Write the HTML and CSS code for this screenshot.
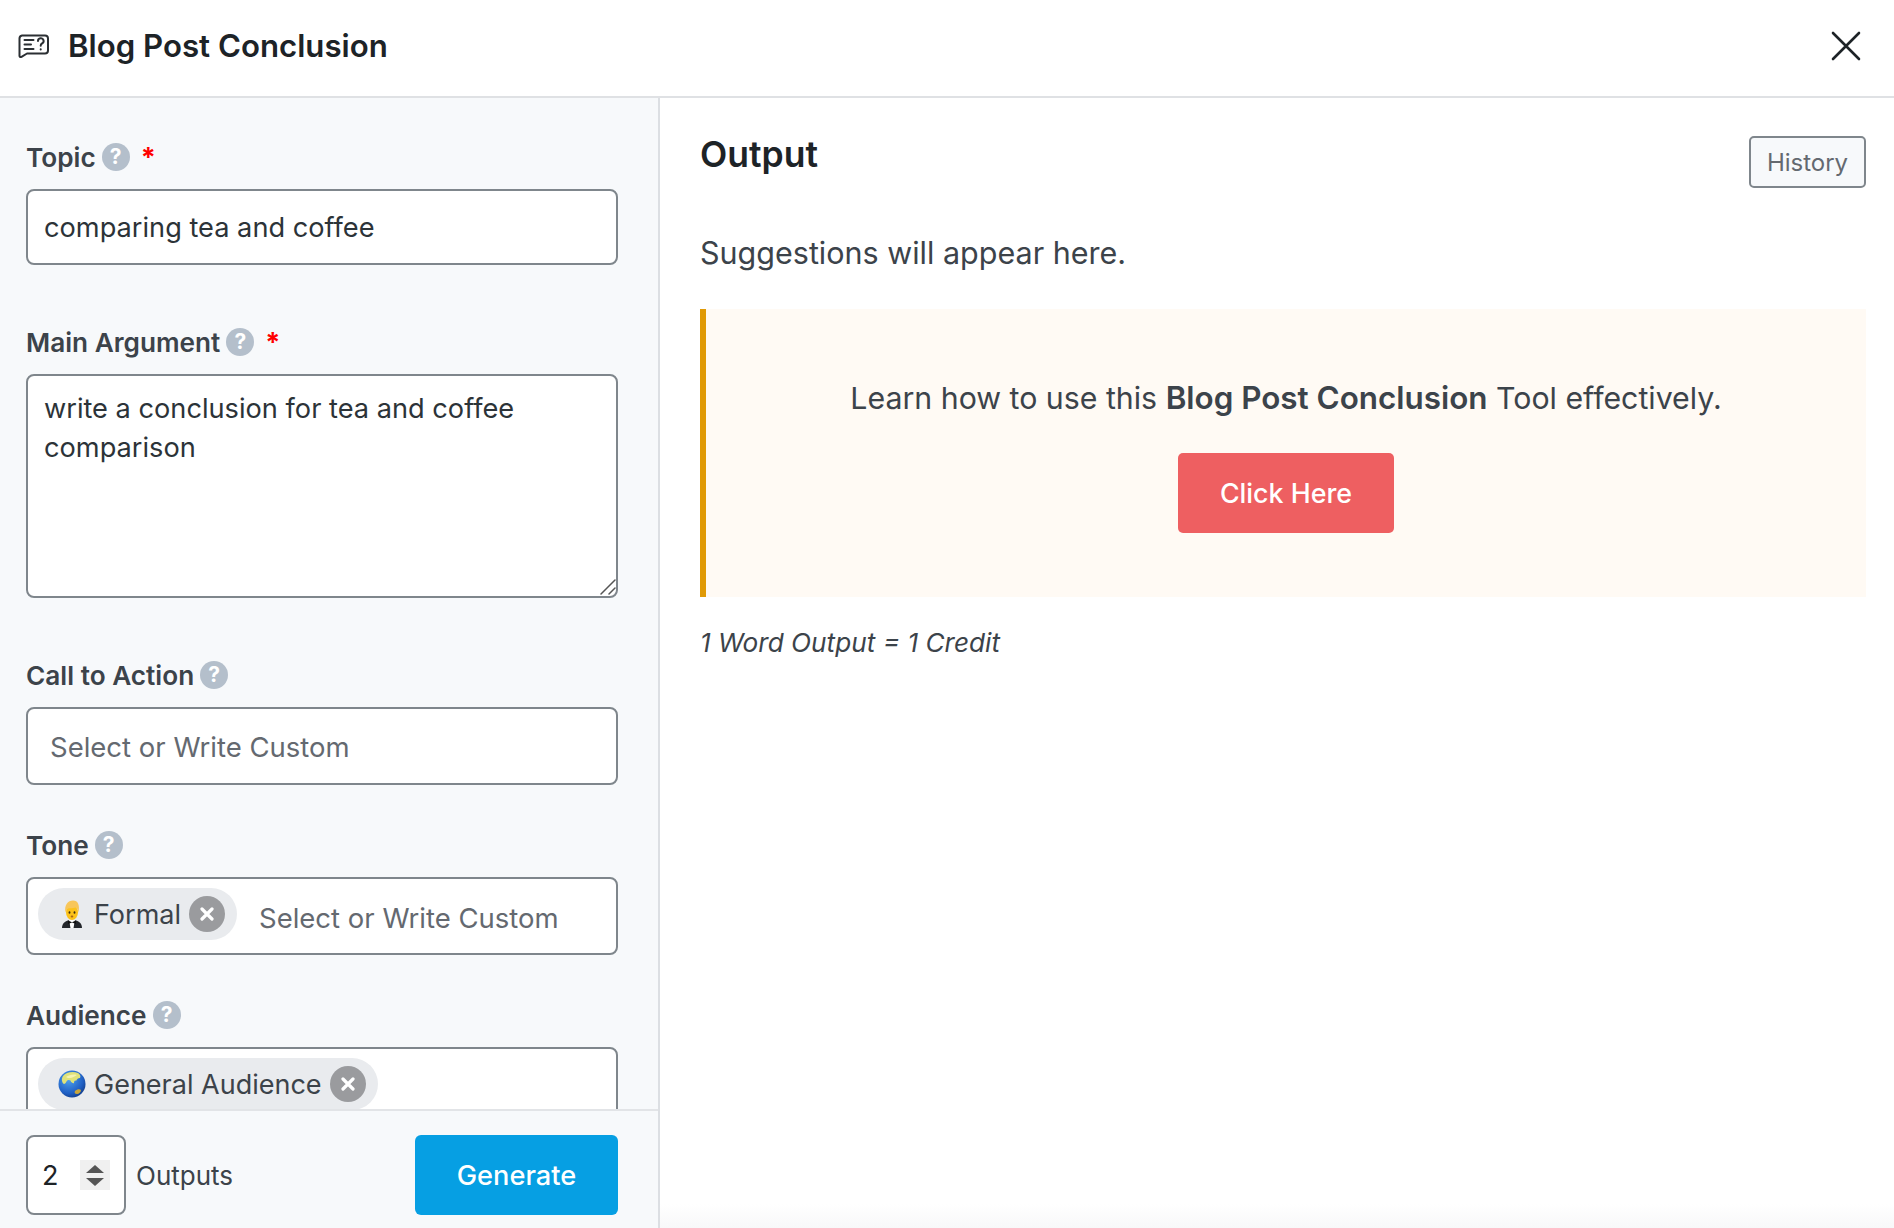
FILE: index.html
```html
<!DOCTYPE html>
<html lang="en">
<head>
<meta charset="utf-8">
<title>Blog Post Conclusion</title>
<link rel="stylesheet" href="styles.css">
</head>
<body>
<div class="app">
  <header class="topbar">
    <div class="topbar-title">
      <svg class="tool-icon" viewBox="0 0 31 24" fill="none" stroke="#2b2f33" stroke-width="2" stroke-linecap="round" stroke-linejoin="round">
        <path d="M4 1.500h23a3 3 0 0 1 3 3v12a3 3 0 0 1-3 3H9l-5.500 3.300a1.200 1.200 0 0 1-2-1V4.500A3 3 0 0 1 4 1.500z"/>
        <path d="M6.500 6h9M6.500 10.500h6.500M6.500 15h9"/>
        <path d="M20 7a2.800 2.800 0 1 1 4 2.500c-1 .5-1.300 1-1.300 2.200"/>
        <path d="M22.700 15.300v.1"/>
      </svg>
      <h1 class="title">Blog Post Conclusion</h1>
    </div>
    <button class="close" type="button" aria-label="Close">
      <svg viewBox="0 0 30 30" fill="none" stroke="#1d2327" stroke-width="2.600" stroke-linecap="round"><path d="M2 2l26 26M28 2L2 28"/></svg>
    </button>
  </header>
  <main class="workspace">
    <section class="form-panel">
      <div class="form-scroll">
        <div class="field field-wide">
          <label class="label">Topic <span class="help">?</span> <span class="req">*</span></label>
          <input class="control text-control" type="text" value="comparing tea and coffee">
        </div>
        <div class="field field-wide">
          <label class="label">Main Argument <span class="help">?</span> <span class="req">*</span></label>
          <div class="textarea-wrap">
            <textarea class="control textarea-control">write a conclusion for tea and coffee comparison</textarea>
            <svg class="grip" viewBox="0 0 16 16" fill="none" stroke="#555" stroke-width="1.500" stroke-linecap="round"><path d="M1 15L15 1M9 15l6-6"/></svg>
          </div>
        </div>
        <div class="field">
          <label class="label">Call to Action <span class="help">?</span></label>
          <div class="control select-control"><span class="placeholder">Select or Write Custom</span></div>
        </div>
        <div class="field">
          <label class="label">Tone <span class="help">?</span></label>
          <div class="control select-control has-pill">
            <span class="pill">
              <svg class="emoji" viewBox="0 0 28 28">
                <path d="M4 28c0-5 3.500-8 10-8s10 3 10 8z" fill="#23262b"/>
                <path d="M11 19.500h6l-1.500 8.500h-3z" fill="#fff"/>
                <path d="M10 20.500l4 1.700 4-1.700v3.400l-4-1.500-4 1.500z" fill="#111"/>
                <ellipse cx="14" cy="12.500" rx="6" ry="7.500" fill="#fcc21b"/>
                <path d="M7.500 12.500C6 5 10 .5 15 .5c5 0 7 4.500 5.500 12-.6-3-1.500-4.500-3-5-3 1-6 .5-7.500 1-1.300 1-2 2-2.500 4z" fill="#f8c65a"/>
                <ellipse cx="11.500" cy="12.500" rx=".9" ry="1.200" fill="#3a2a12"/>
                <ellipse cx="16.500" cy="12.500" rx=".9" ry="1.200" fill="#3a2a12"/>
                <ellipse cx="14" cy="16.500" rx="1.300" ry="1" fill="#a8641a"/>
              </svg>
              <span class="pill-text">Formal</span>
              <span class="pill-x"><svg viewBox="0 0 14 14" fill="none" stroke="#fff" stroke-width="3.200" stroke-linecap="round"><path d="M2 2l10 10M12 2L2 12"/></svg></span>
            </span>
            <span class="placeholder inline-placeholder">Select or Write Custom</span>
          </div>
        </div>
        <div class="field">
          <label class="label">Audience <span class="help">?</span></label>
          <div class="control select-control has-pill">
            <span class="pill">
              <svg class="emoji" viewBox="0 0 28 28">
                <defs><radialGradient id="sea" cx="38%" cy="32%" r="75%"><stop offset="0" stop-color="#4fa3f0"/><stop offset=".7" stop-color="#1f5fc4"/><stop offset="1" stop-color="#123a86"/></radialGradient></defs>
                <circle cx="14" cy="14" r="13.500" fill="url(#sea)"/>
                <path d="M5 6c3-4 10-5 15-3 2 1 3 3 2 5-2 0-3 1-4 3-1-1-2 0-2 2-1 1-2-1-3-1 0-2-2-2-3-2-2 1-2 4-4 4-2-1-3-5-1-8z" fill="#dfe27a"/>
                <path d="M8 7c3-2 7-3 11-2-2 1-5 3-7 3-1 0-3 0-4-1z" fill="#f5f3b0"/>
                <path d="M17 21c2-2 5-2 6-1 0 2-2 4-4 4-2 0-3-1-2-3z" fill="#c9a63b"/>
              </svg>
              <span class="pill-text">General Audience</span>
              <span class="pill-x"><svg viewBox="0 0 14 14" fill="none" stroke="#fff" stroke-width="3.200" stroke-linecap="round"><path d="M2 2l10 10M12 2L2 12"/></svg></span>
            </span>
          </div>
        </div>
      </div>
      <footer class="form-footer">
        <div class="outputs">
          <div class="number-control">
            <span class="number-value">2</span>
            <span class="spinner"><svg viewBox="0 0 30 30"><path d="M15 5l9 8H6zM15 26l-9-8h18z" fill="#555"/></svg></span>
          </div>
          <span class="outputs-label">Outputs</span>
        </div>
        <button class="generate" type="button">Generate</button>
      </footer>
    </section>
    <section class="output-panel">
      <div class="output-head">
        <h2 class="output-title">Output</h2>
        <button class="history" type="button">History</button>
      </div>
      <p class="suggestions">Suggestions will appear here.</p>
      <div class="callout">
        <p class="callout-text">Learn how to use this <strong>Blog Post Conclusion</strong> Tool effectively.</p>
        <a class="callout-button" href="#">Click Here</a>
      </div>
      <p class="credit">1 Word Output = 1 Credit</p>
    </section>
  </main>
</div>
</body>
</html>
```

FILE: styles.css
```css
* { box-sizing: border-box; }
html, body { margin: 0; height: 100%; overflow: hidden; background: #fff; }
body { font-family: Inter, "Liberation Sans", sans-serif; color: #3c434a; }

.app { height: 100vh; display: flex; flex-direction: column; }

.topbar { flex: 0 0 98px; display: flex; align-items: center; justify-content: space-between; padding: 0 33px 4px 18px; border-bottom: 2px solid #dfe1e4; background: #fff; }
.topbar-title { display: flex; align-items: center; gap: 19px; }
.tool-icon { width: 31px; height: 24px; display: block; }
.title { margin: 0; font-size: 31.200px; line-height: 40px; font-weight: 600; color: #1d2327; }
.close { padding: 0; width: 30px; height: 30px; border: 0; background: none; display: block; }
.close svg { display: block; width: 30px; height: 30px; }

.workspace { flex: 1; min-height: 0; display: grid; grid-template-columns: 660px 1fr; }

.form-panel { display: flex; flex-direction: column; min-height: 0; background: #f7f9fb; border-right: 2px solid #dcdfe3; }
.form-scroll { flex: 1; min-height: 0; overflow: hidden; padding: 43px 40px 0 26px; }
.field { margin-bottom: 44px; }
.field-wide { margin-bottom: 61px; }
.label { display: flex; align-items: center; gap: 6px; height: 32px; margin-bottom: 16px; font-size: 26.200px; font-weight: 600; color: #3c434a; }
.help { width: 28px; height: 28px; border-radius: 50%; background: #b4bfcb; color: #fff; font-size: 21px; font-weight: 700; line-height: 28px; text-align: center; }
.req { color: #f00; margin-left: 5px; font-size: 27px; font-weight: 700; }

.control { display: block; width: 100%; border: 2px solid #7f868c; border-radius: 8px; background: #fff; font: inherit; font-size: 27.200px; color: #2c3338; }
.text-control { height: 76px; padding: 0 16px; outline: none; }
.textarea-wrap { position: relative; }
.textarea-control { height: 224px; padding: 13px 16px; line-height: 39px; resize: none; outline: none; }
.grip { position: absolute; right: 2px; bottom: 3px; width: 16px; height: 16px; }
.select-control { height: 78px; display: flex; align-items: center; padding: 2px 22px 0; }
.select-control.has-pill { align-items: flex-start; padding: 9px 10px 0; }
.placeholder { color: #646970; font-size: 27.500px; }
.inline-placeholder { align-self: center; margin-left: 22px; margin-top: -6px; }

.pill { display: inline-flex; align-items: center; height: 52px; padding: 0 12px 0 20px; border-radius: 26px; background: #e9ebee; flex: none; }
.emoji { width: 28px; height: 28px; display: block; margin-right: 8px; }
.pill-text { font-size: 27px; color: #3c434a; }
.pill-x { width: 36px; height: 36px; margin-left: 8px; border-radius: 50%; background: #9a9b9e; display: flex; align-items: center; justify-content: center; }
.pill-x svg { width: 14px; height: 14px; display: block; }

.form-footer { flex: 0 0 119px; display: flex; align-items: flex-start; justify-content: space-between; padding: 24px 40px 13px 26px; border-top: 2px solid #e2e4e7; background: #f7f9fb; }
.outputs { display: flex; align-items: center; gap: 10px; }
.number-control { width: 100px; height: 80px; display: flex; align-items: center; justify-content: space-between; padding: 0 14px; border: 2px solid #7f868c; border-radius: 8px; background: #fff; }
.number-value { font-size: 27px; color: #1d2327; }
.spinner { width: 30px; height: 30px; background: #f0f0f0; display: block; }
.spinner svg { display: block; width: 30px; height: 30px; }
.outputs-label { font-size: 26px; color: #3c434a; }
.generate { width: 203px; height: 80px; border: 0; border-radius: 6px; background: #069fe3; color: #fff; font: inherit; font-size: 27.200px; font-weight: 500; }

.output-panel { padding: 38px 28px 0 40px; background: linear-gradient(to top, #f8f8f9 0, #fff 24px); }
.output-head { display: flex; justify-content: space-between; align-items: flex-start; height: 90px; }
.output-title { margin: -1px 0 0; font-size: 35.500px; line-height: 40px; font-weight: 600; color: #1d2327; }
.history { width: 117px; height: 52px; border: 2px solid #7f868c; border-radius: 5px; background: #f7f9fb; color: #646970; font: inherit; font-size: 24px; padding: 0; }
.suggestions { margin: 0 0 29px; font-size: 30.500px; line-height: 54px; color: #3c434a; }
.callout { height: 288px; padding-top: 67px; border-left: 6px solid #e09a06; background: #fffaf4; display: flex; flex-direction: column; align-items: center; }
.callout-text { margin: 0 0 33px; font-size: 30.300px; line-height: 44px; color: #3c434a; }
.callout-text strong { font-size: 31.400px; font-weight: 600; }
.callout-button { width: 216px; height: 80px; display: flex; align-items: center; justify-content: center; border-radius: 5px; background: #ee5f61; color: #fff; font-size: 26.800px; font-weight: 500; text-decoration: none; }
.credit { margin: 29px 0 0; font-size: 26.200px; line-height: 34px; font-style: italic; color: #3c434a; }
```
